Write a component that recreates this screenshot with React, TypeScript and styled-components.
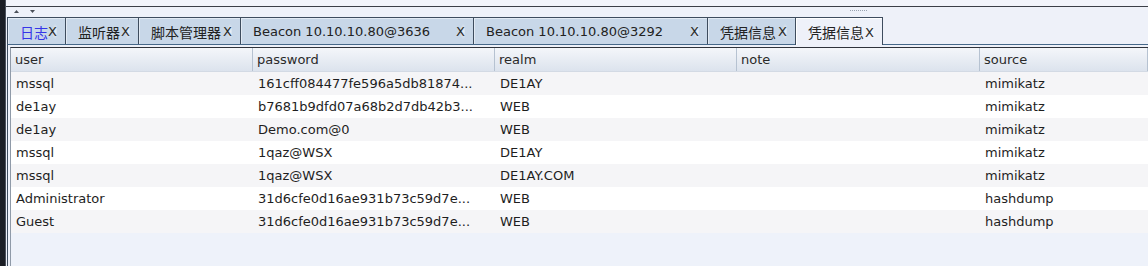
import styled, { createGlobalStyle } from 'styled-components'

const GlobalStyle = createGlobalStyle`
  html, body {
    margin: 0;
    padding: 0;
    background: #eef1f9;
  }
  body {
    font-family: "DejaVu Sans", "Noto Sans CJK SC", sans-serif;
    font-size: 13px;
    color: #222;
  }
`

const tabs = [
  { label: '日志', width: 59, highlight: true, cjk: true },
  { label: '监听器', width: 74, cjk: true },
  { label: '脚本管理器', width: 103, cjk: true },
  { label: 'Beacon 10.10.10.80@3636', width: 234 },
  { label: 'Beacon 10.10.10.80@3292', width: 235 },
  { label: '凭据信息', width: 89, cjk: true },
  { label: '凭据信息', width: 88, active: true, cjk: true },
]

const columns = ['user', 'password', 'realm', 'note', 'source']

const rows = [
  ['mssql', '161cff084477fe596a5db81874...', 'DE1AY', '', 'mimikatz'],
  ['de1ay', 'b7681b9dfd07a68b2d7db42b3...', 'WEB', '', 'mimikatz'],
  ['de1ay', 'Demo.com@0', 'WEB', '', 'mimikatz'],
  ['mssql', '1qaz@WSX', 'DE1AY', '', 'mimikatz'],
  ['mssql', '1qaz@WSX', 'DE1AY.COM', '', 'mimikatz'],
  ['Administrator', '31d6cfe0d16ae931b73c59d7e...', 'WEB', '', 'hashdump'],
  ['Guest', '31d6cfe0d16ae931b73c59d7e...', 'WEB', '', 'hashdump'],
]

const App = () => {
  return (
    <>
      <GlobalStyle />
      <Frame>
        <SideStrip />
        <Main>
          <TopGap />
          <Panel>
            <ArrowRow>
              <svg width="5" height="3" viewBox="0 0 5 3"><path d="M0 3 L2.5 0 L5 3 Z" fill="#4a4f58" /></svg>
              <svg width="5" height="3" viewBox="0 0 5 3"><path d="M0 0 L2.5 3 L5 0 Z" fill="#4a4f58" /></svg>
              <Grip />
            </ArrowRow>
            <TabBar>
              {tabs.map((t, i) => (
                <Tab key={i} $width={t.width} $active={!!t.active}>
                  <TabLabel $highlight={!!t.highlight} $cjk={!!t.cjk}>{t.label}</TabLabel>
                  <CloseX>X</CloseX>
                </Tab>
              ))}
            </TabBar>
            <Content>
              <Table>
                <HeaderRow>
                  {columns.map((c) => (
                    <HeaderCell key={c}>{c}</HeaderCell>
                  ))}
                </HeaderRow>
                {rows.map((r, i) => (
                  <Row key={i} $odd={i % 2 === 0}>
                    {r.map((v, j) => (
                      <Cell key={j}>{v}</Cell>
                    ))}
                  </Row>
                ))}
              </Table>
            </Content>
          </Panel>
        </Main>
      </Frame>
    </>
  )
}

const Frame = styled.div`
  display: flex;
  width: 1148px;
  height: 266px;
  overflow: hidden;
`

const SideStrip = styled.div`
  width: 5px;
  flex-shrink: 0;
  background: #1b1e25;
  border-right: 1px solid #4b515c;
`

const Main = styled.div`
  flex: 1;
  min-width: 0;
  display: flex;
  flex-direction: column;
`

const TopGap = styled.div`
  height: 6px;
  background: #f2f4fb;
`

const Panel = styled.div`
  flex: 1;
  display: flex;
  flex-direction: column;
  border-top: 1px solid #3b3f48;
  padding-left: 1px;
  background: #eef1f9;
`

const ArrowRow = styled.div`
  height: 10px;
  box-sizing: border-box;
  display: flex;
  align-items: flex-start;
  gap: 11px;
  padding: 3px 0 0 7px;
`

const Grip = styled.span`
  width: 17px;
  margin-left: 804px;
  border-top: 1px dotted #9aa3b0;
`

const TabBar = styled.div`
  display: flex;
  height: 27px;
  position: relative;
  z-index: 1;
`

const Tab = styled.div<{ $width: number; $active: boolean }>`
  box-sizing: border-box;
  width: ${({ $width }) => $width}px;
  height: ${({ $active }) => ($active ? 28 : 27)}px;
  display: flex;
  align-items: center;
  justify-content: space-between;
  padding: 1px 8px 0 12px;
  border: 1px solid #3e4c5e;
  border-bottom: none;
  background: ${({ $active }) => ($active ? '#eef1f9' : '#c8d7e8')};
  box-shadow: inset 1px 1px 0 ${({ $active }) => ($active ? '#ffffff' : '#e2eaf4')};
  white-space: nowrap;

  & + & {
    margin-left: -1px;
  }
`

const TabLabel = styled.span<{ $highlight: boolean; $cjk: boolean }>`
  font-size: ${({ $cjk }) => ($cjk ? 14 : 13)}px;
  color: ${({ $highlight }) => ($highlight ? '#3535e8' : '#222')};
`

const CloseX = styled.span`
  color: #2a2a2a;
  background: radial-gradient(ellipse 3px 8px at 80% 50%, rgba(255, 255, 255, 0.6), transparent);
`

const Content = styled.div`
  flex: 1;
  border-top: 1px solid #466889;
  border-left: 1px solid #3e4c5e;
  padding: 2px 0 0 2px;
`

const Table = styled.div`
  height: 100%;
  border-top: 1px solid #2f333b;
  border-left: 1px solid #8f9aa8;
  background: #eef2fa;
`

const HeaderRow = styled.div`
  display: grid;
  grid-template-columns: 242px 242px 242px 243px 1fr;
  height: 24px;
  box-sizing: border-box;
  border-bottom: 1px solid #d3dae4;
  background: linear-gradient(#f4f6fa, #dce3ed);
`

const HeaderCell = styled.div`
  padding-left: 4px;
  line-height: 23px;
  color: #2a2a2a;
  border-right: 1px solid #b6c2d1;
`

const Row = styled.div<{ $odd: boolean }>`
  display: grid;
  grid-template-columns: 242px 242px 242px 243px 1fr;
  height: 23px;
  background: ${({ $odd }) => ($odd ? '#f5f5f7' : '#ffffff')};
`

const Cell = styled.div`
  padding-left: 5px;
  line-height: 23px;
  color: #1e1e1e;
  white-space: nowrap;
  overflow: hidden;
`

export default App
